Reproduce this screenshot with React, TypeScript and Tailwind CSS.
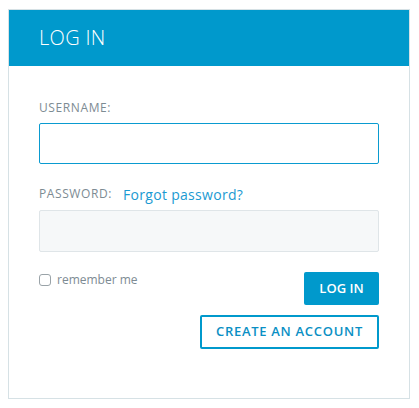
export default function App() {
  return (
    <div className="w-[419px] h-[408px] bg-white pt-[9px] pl-[8px]" style={{ fontFamily: '"Open Sans", "Liberation Sans", sans-serif' }}>
      <div className="w-[402px] h-[390px] border border-[#d6e1e5] flex flex-col">
        <div className="h-[56px] bg-[#0099cc] flex items-center pl-[30px]">
          <span className="text-white text-[20px] font-light tracking-[0.3px]">LOG IN</span>
        </div>
        <div className="px-[30px] pt-[34px] flex flex-col">
          <label className="text-[12px] text-[#7d8b93] leading-[16px] tracking-[0.6px]">USERNAME:</label>
          <input className="mt-[7px] h-[41px] w-[340px] border border-[#0a9bd0] rounded-[2px] outline-none" />
          <div className="mt-[20px] flex items-center h-[20px]">
            <span className="text-[12px] text-[#7d8b93] tracking-[0.6px]">PASSWORD:</span>
            <span className="ml-[11px] text-[14px] text-[#1b9ad2] tracking-[0.3px]">Forgot password?</span>
          </div>
          <input type="password" className="mt-[6px] h-[42px] w-[340px] bg-[#f6f8f9] border border-[#dfe5e8] rounded-[2px] outline-none" />
          <div className="mt-[20px] flex justify-between items-start">
            <div className="flex items-center gap-[6px] mt-[-1px]">
              <span className="w-[12px] h-[12px] border border-[#9aa3a8] rounded-[3px] bg-white"></span>
              <span className="text-[12px] text-[#7d8b93]">remember me</span>
            </div>
            <button className="w-[75px] h-[33px] bg-[#0099cc] text-white text-[13px] font-semibold rounded-[2px]">LOG IN</button>
          </div>
          <div className="mt-[10px] flex justify-end">
            <button className="w-[179px] h-[34px] border-2 border-[#0099cc] text-[#0a8fc4] text-[13px] font-semibold rounded-[2px] tracking-[0.7px]">CREATE AN ACCOUNT</button>
          </div>
        </div>
      </div>
    </div>
  );
}
